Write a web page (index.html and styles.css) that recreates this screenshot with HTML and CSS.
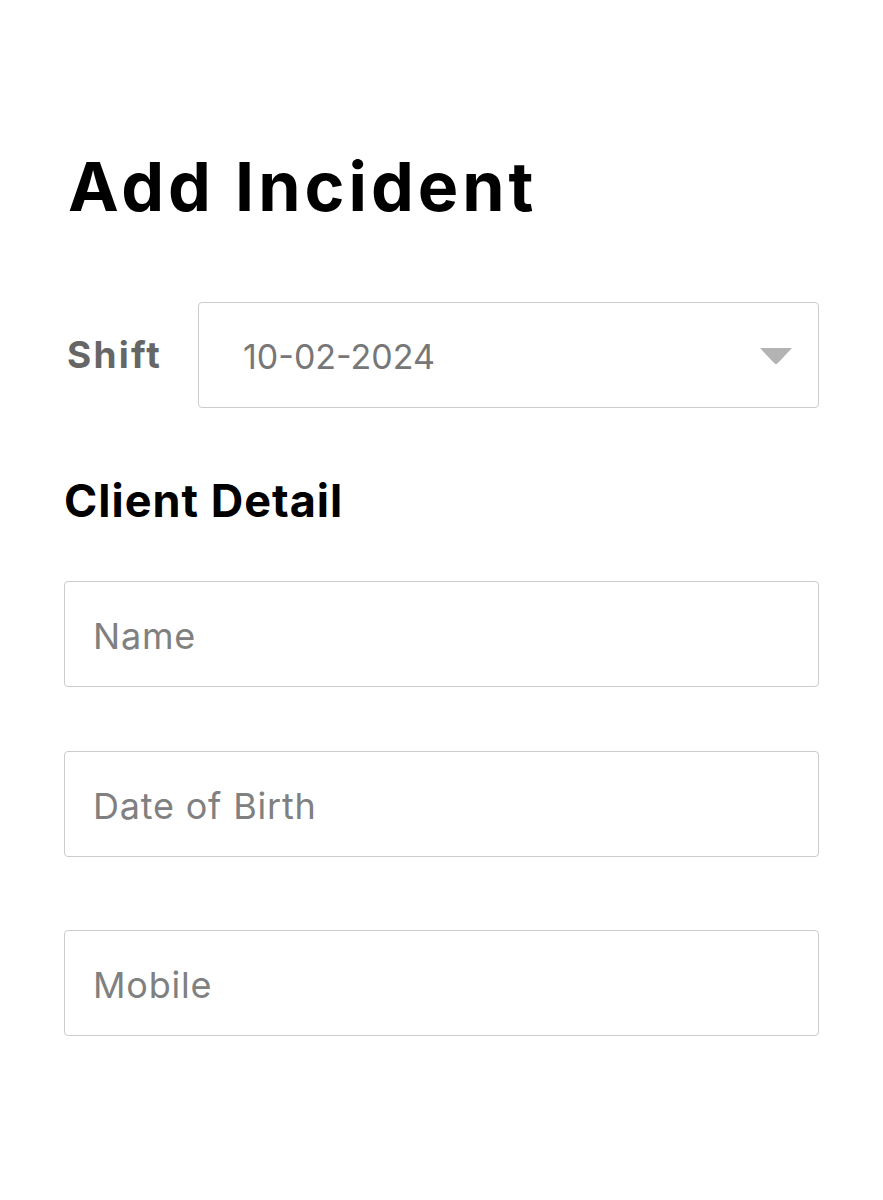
FILE: index.html
```html
<!DOCTYPE html>
<html lang="en">
<head>
<meta charset="utf-8">
<title>Add Incident</title>
<link rel="stylesheet" href="styles.css">
</head>
<body>
<main class="page">
  <h1 class="title">Add Incident</h1>
  <div class="shift-row">
    <span class="shift-label">Shift</span>
    <div class="select">
      <span class="select-value">10-02-2024</span>
      <svg class="caret" width="32" height="16" viewBox="0 0 32 16" aria-hidden="true">
        <path d="M0 0 H32 L18 15 Q16 17 14 15 Z" fill="#b3b3b3"/>
      </svg>
    </div>
  </div>
  <h2 class="section-title">Client Detail</h2>
  <input class="field field-name" type="text" placeholder="Name">
  <input class="field field-dob" type="text" placeholder="Date of Birth">
  <input class="field field-mobile" type="text" placeholder="Mobile">
</main>
</body>
</html>
```

FILE: styles.css
```css
* { box-sizing: border-box; }
html, body { margin: 0; padding: 0; background: #fff; }
body { font-family: Inter, "DejaVu Sans", sans-serif; }

.page {
  padding: 153px 64px 0 64px;
  display: flex;
  flex-direction: column;
}

.title {
  margin: 0 0 0 4px;
  font-size: 68px;
  line-height: 67px;
  font-weight: 700;
  color: #000;
  letter-spacing: 4px;
}

.shift-row {
  margin-top: 82px;
  display: flex;
  align-items: center;
}

.shift-label {
  width: 134px;
  padding-left: 3px;
  font-size: 37px;
  line-height: 40px;
  font-weight: 700;
  color: #666;
  letter-spacing: 2.2px;
}

.select {
  flex: 1;
  height: 106px;
  border: 1px solid #cccccc;
  border-radius: 4px;
  display: flex;
  align-items: center;
  justify-content: space-between;
  padding: 0 26px 0 44px;
}

.select-value {
  font-size: 34px;
  color: #777;
  font-weight: 400;
  margin-top: 3px;
}

.caret { display: block; margin-top: 2px; }

.section-title {
  margin: 70px 0 0 0;
  font-size: 45px;
  line-height: 45px;
  font-weight: 700;
  color: #000;
  letter-spacing: 1px;
}

.field {
  display: block;
  width: 100%;
  height: 106px;
  border: 1px solid #cccccc;
  border-radius: 4px;
  padding: 4px 28px 0 28px;
  font-family: Inter, "DejaVu Sans", sans-serif;
  font-size: 36px;
  letter-spacing: 0.8px;
  color: #333;
  background: #fff;
  outline: none;
}
.field::placeholder { color: #808080; opacity: 1; }

.field-name { margin-top: 58px; }
.field-dob { margin-top: 64px; }
.field-mobile { margin-top: 73px; }
```
